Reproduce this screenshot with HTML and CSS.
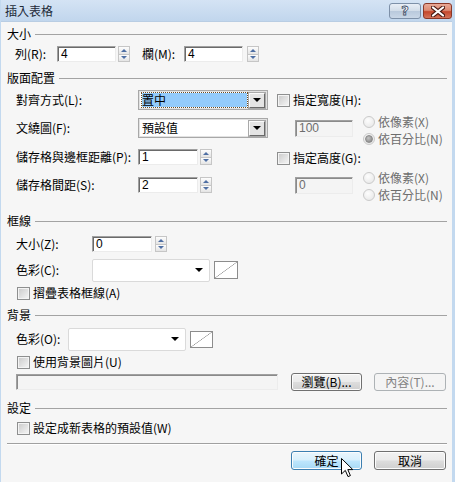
FILE: index.html
```html
<!DOCTYPE html>
<html lang="zh-Hant">
<head>
  <meta charset="UTF-8" />
  <title>插入表格</title>
  <link rel="stylesheet" href="styles.css">
</head>
<body>
<div class="window">
  <!-- Title bar -->
  <div class="titlebar">
    <span class="title">插入表格</span>
    <div class="caption-btns">
      <span class="cap-btn help">?</span>
      <span class="cap-btn close">
        <svg width="14" height="11" viewBox="0 0 14 11">
          <path d="M2 1.5 L12 9.5 M12 1.5 L2 9.5" stroke="#4a1a12" stroke-width="4.2" stroke-linecap="round"/>
          <path d="M2 1.5 L12 9.5 M12 1.5 L2 9.5" stroke="#fff" stroke-width="2.2" stroke-linecap="round"/>
        </svg>
      </span>
    </div>
  </div>

  <div class="client">
    <!-- 大小 -->
    <div class="group-head"><span>大小</span></div>
    <div class="row row-size">
      <span class="lbl w42">列(R):</span>
      <span class="field w59">4</span>
      <span class="spin"><i class="up"></i><i class="down"></i></span>
      <span class="lbl w42 gap12">欄(M):</span>
      <span class="field w59">4</span>
      <span class="spin gap4"><i class="up"></i><i class="down"></i></span>
    </div>

    <!-- 版面配置 -->
    <div class="group-head mt4"><span>版面配置</span></div>
    <div class="layout">
      <div class="layout-left">
        <div class="row h24">
          <span class="lbl w122">對齊方式(L):</span>
          <span class="select">
            <span class="select-text"><span class="selected">置中</span></span>
            <span class="drop-btn"><i></i></span>
          </span>
        </div>
        <div class="row h32">
          <span class="lbl w122">文繞圖(F):</span>
          <span class="select">
            <span class="select-text">預設值</span>
            <span class="drop-btn"><i></i></span>
          </span>
        </div>
        <div class="row h26">
          <span class="lbl w122">儲存格與邊框距離(P):</span>
          <span class="field w60">1</span>
          <span class="spin"><i class="up"></i><i class="down"></i></span>
        </div>
        <div class="row h30">
          <span class="lbl w122">儲存格間距(S):</span>
          <span class="field w60">2</span>
          <span class="spin"><i class="up"></i><i class="down"></i></span>
        </div>
      </div>

      <div class="layout-right">
        <div class="row h24"><span class="cb"></span>指定寬度(H):</div>
        <div class="sub">
          <span class="field disabled mt8">100</span>
          <div class="radios">
            <div class="radio-row first"><span class="radio"></span>依像素(X)</div>
            <div class="radio-row"><span class="radio on"></span>依百分比(N)</div>
          </div>
        </div>
        <div class="row h20"><span class="cb"></span>指定高度(G):</div>
        <div class="sub">
          <span class="field disabled mt9">0</span>
          <div class="radios">
            <div class="radio-row first"><span class="radio"></span>依像素(X)</div>
            <div class="radio-row"><span class="radio"></span>依百分比(N)</div>
          </div>
        </div>
      </div>
    </div>

    <!-- 框線 -->
    <div class="group-head mt7"><span>框線</span></div>
    <div class="row h26 indent">
      <span class="lbl w76">大小(Z):</span>
      <span class="field w60">0</span>
      <span class="spin gap3"><i class="up"></i><i class="down"></i></span>
    </div>
    <div class="row h26 indent">
      <span class="lbl w76">色彩(C):</span>
      <span class="color-drop"><i></i></span>
      <span class="swatch"></span>
    </div>
    <div class="row h20 indent-cb"><span class="cb"></span>摺疊表格框線(A)</div>

    <!-- 背景 -->
    <div class="group-head mt2"><span>背景</span></div>
    <div class="row h28 indent">
      <span class="lbl w52">色彩(O):</span>
      <span class="color-drop"><i></i></span>
      <span class="swatch small"></span>
    </div>
    <div class="row h18 indent-cb"><span class="cb"></span>使用背景圖片(U)</div>
    <div class="row h22 indent">
      <span class="field disabled file"></span>
      <span class="btn browse">瀏覽(B)...</span>
      <span class="btn off">內容(T)...</span>
    </div>

    <!-- 設定 -->
    <div class="group-head mt5"><span>設定</span></div>
    <div class="row h20 indent-cb"><span class="cb"></span>設定成新表格的預設值(W)</div>

    <div class="separator"></div>

    <div class="actions">
      <span class="btn ok">確定</span>
      <span class="btn">取消</span>
    </div>
  </div>

  <!-- mouse pointer over the OK button -->
  <svg class="pointer" width="13" height="20" viewBox="0 0 13 20">
    <path d="M0.5 0.5 L0.5 16 L4.3 12.4 L7 18.6 L9.4 17.6 L6.8 11.6 L11.8 11.6 Z" fill="#fff" stroke="#000" stroke-width="1" stroke-linejoin="miter"/>
  </svg>
</div>
</body>
</html>
```

FILE: styles.css
```css
* {
  box-sizing: border-box;
}

body {
  margin: 0;
  font-family: "Noto Sans CJK TC", "Noto Sans", sans-serif;
  font-size: 12px;
  color: #000;
  background: #f6f6f6;
}

.window {
  position: relative;
  width: 455px;
  height: 482px;
  overflow: hidden;
  background: #f6f6f6;
  border-left: 1px solid #c3d9ef;
  border-right: 3px solid #c3d9ef;
}

/* title bar */
.titlebar {
  height: 22px;
  display: flex;
  align-items: center;
  justify-content: space-between;
  padding-left: 4px;
  background: linear-gradient(#d4e3f4, #c1d6ed);
  border-bottom: 1px solid #b9cde3;
}

.title {
  font-size: 12px;
  line-height: 14px;
  color: #1e2a38;
}

.caption-btns {
  display: flex;
  align-self: flex-start;
  margin-top: 3px;
  gap: 2px;
}

.cap-btn {
  height: 16px;
  border-radius: 3px;
  display: flex;
  align-items: center;
  justify-content: center;
}

.help {
  width: 32px;
  border: 1px solid #7d90a8;
  background: linear-gradient(#e8eef6 0%, #d2dde9 48%, #b9c9dc 52%, #c9d7e7 100%);
  color: #fff;
  font-family: "DejaVu Sans", sans-serif;
  font-weight: bold;
  font-size: 13px;
  -webkit-text-stroke: 0.8px #3c4d66;
  line-height: 14px;
}

.close {
  width: 29px;
  border: 1px solid #8a3828;
  background: linear-gradient(#e9a996 0%, #dc8a73 45%, #c5472c 55%, #d3735a 100%);
}

/* client area */
.client {
  padding: 2px 5px 0 6px;
}

.group-head {
  display: flex;
  align-items: center;
  height: 20px;
  line-height: 14px;
}

.group-head::after {
  content: "";
  flex: 1;
  height: 1px;
  margin-left: 4px;
  background: #a3a3a3;
}

.mt2 { margin-top: 2px; }
.mt4 { margin-top: 4px; }
.mt5 { margin-top: 5px; }
.mt7 { margin-top: 7px; }
.mt8 { margin-top: 8px; }
.mt9 { margin-top: 9px; }

.row {
  display: flex;
  align-items: center;
  line-height: 14px;
  white-space: nowrap;
}

.row-size {
  height: 20px;
  padding-left: 8px;
}

.h18 { height: 18px; }
.h20 { height: 20px; }
.h22 { height: 22px; }
.h24 { height: 24px; }
.h26 { height: 26px; }
.h28 { height: 28px; }
.h30 { height: 30px; }
.h32 { height: 32px; }

.indent { padding-left: 9px; }
.indent-cb { padding-left: 10px; }

.lbl { flex: none; }
.w42 { width: 42px; }
.w52 { width: 52px; }
.w76 { width: 76px; }
.w122 { width: 122px; }
.gap12 { margin-left: 12px; }
.gap4 { margin-left: 4px !important; }
.gap3 { margin-left: 3px !important; }

/* sunken text field */
.field {
  height: 16px;
  background: #fff;
  border: 1px solid;
  border-color: #a0a0a0 #ececec #ececec #a0a0a0;
  box-shadow: inset 1px 1px 0 #6a6a6a;
  padding-left: 3px;
  line-height: 14px;
  font-family: "Liberation Sans", "Noto Sans CJK TC", sans-serif;
  font-size: 12px;
  flex: none;
}

.w59 { width: 59px; }
.w60 { width: 60px; }

.field.disabled {
  width: 58px;
  height: 17px;
  background: #f4f4f4;
  color: #6d6d6d;
  box-shadow: inset 1px 1px 0 #8a8a8a;
}

.field.file {
  width: 262px;
  height: 16px;
}

/* spin buttons */
.spin {
  display: flex;
  flex-direction: column;
  width: 12px;
  height: 16px;
  margin-left: 2px;
  flex: none;
}

.spin i {
  flex: 1;
  display: flex;
  align-items: center;
  justify-content: center;
  border: 1px solid #c6c6c6;
  background: linear-gradient(#fdfdfd, #e4e4e4);
}

.spin i + i {
  border-top: none;
}

.spin .up::after {
  content: "";
  border-left: 3px solid transparent;
  border-right: 3px solid transparent;
  border-bottom: 3px solid #4f6fa3;
}

.spin .down::after {
  content: "";
  border-left: 3px solid transparent;
  border-right: 3px solid transparent;
  border-top: 3px solid #4f6fa3;
}

/* layout section */
.layout {
  display: flex;
}

.layout-left {
  width: 270px;
  padding-left: 9px;
}

.layout-right {
  flex: 1;
}

.sub {
  display: flex;
  height: 36px;
  padding-left: 18px;
  align-items: flex-start;
}

.radios {
  margin-left: 10px;
  color: #6d6d6d;
}

.radio-row {
  display: flex;
  align-items: center;
  height: 18px;
  line-height: 14px;
  white-space: nowrap;
}

.radio-row.first {
  height: 16px;
  margin-top: 2px;
}

.radio {
  width: 12px;
  height: 12px;
  margin-right: 3px;
  border-radius: 50%;
  border: 1px solid #cacaca;
  background: radial-gradient(circle at 40% 35%, #fdfdfd, #e4e4e4);
  display: flex;
  align-items: center;
  justify-content: center;
}

.radio.on::after {
  content: "";
  width: 6px;
  height: 6px;
  border-radius: 50%;
  background: radial-gradient(circle at 40% 35%, #c4c4c4, #7d7d7d);
  border: 1px solid #8a8a8a;
}

/* checkbox */
.cb {
  width: 13px;
  height: 13px;
  margin-right: 3px;
  flex: none;
  border: 1px solid #8e8f8f;
  background: linear-gradient(135deg, #c9c9c9, #f7f7f7);
  box-shadow: inset 0 0 0 1px #f4f4f4;
}

/* dropdowns */
.select {
  width: 130px;
  height: 20px;
  display: flex;
  align-items: center;
  border: 1px solid #a8a8a8;
  box-shadow: inset 0 0 0 1px #e2e2e2;
  background: #fff;
  padding: 2px;
}

.select-text {
  flex: 1;
  height: 14px;
  line-height: 14px;
  padding-left: 1px;
}

.selected {
  display: block;
  height: 14px;
  margin-right: 2px;
  background: #93cbfb;
  outline: 1px dotted #6b4a20;
}

.drop-btn {
  width: 16px;
  height: 15px;
  display: flex;
  align-items: center;
  justify-content: center;
  background: #e4e4e4;
  border: 1px solid;
  border-color: #fbfbfb #696969 #696969 #fbfbfb;
  outline: 1px solid #a9a9a9;
}

.drop-btn i,
.color-drop i {
  border-left: 4px solid transparent;
  border-right: 4px solid transparent;
  border-top: 4px solid #000;
}

.color-drop {
  width: 118px;
  height: 23px;
  display: flex;
  align-items: center;
  justify-content: flex-end;
  padding-right: 6px;
  background: #fff;
  border: 1px solid #dadada;
  border-radius: 2px;
}

.swatch {
  width: 24px;
  height: 18px;
  margin-left: 4px;
  border: 1px solid #8c8c8c;
  background: linear-gradient(to bottom right, #fff calc(50% - 0.6px), #9a9a9a 50%, #fff calc(50% + 0.6px));
}

.swatch.small {
  width: 23px;
  height: 17px;
}

/* push buttons */
.btn {
  display: flex;
  align-items: center;
  justify-content: center;
  width: 72px;
  height: 19px;
  border: 1px solid #707070;
  border-radius: 3px;
  background: linear-gradient(#f2f2f2 0%, #ebebeb 48%, #dddddd 52%, #cfcfcf 100%);
  box-shadow: inset 0 0 0 1px #fcfcfc;
  line-height: 14px;
}

.browse {
  width: 71px;
  height: 18px;
  margin-left: 13px;
}

.btn.off {
  margin-left: 12px;
  height: 18px;
  border-color: #adb2b5;
  background: #f4f4f4;
  box-shadow: none;
  color: #838383;
}

.btn.ok {
  width: 71px;
  border-color: #3c7fb1;
  background: linear-gradient(#eaf6fd 0%, #d9f0fc 48%, #bee6fd 52%, #a7d9f5 100%);
}

.separator {
  margin-top: 5px;
  height: 2px;
  border-top: 1px solid #a0a0a0;
  border-bottom: 1px solid #fff;
}

.actions {
  display: flex;
  justify-content: flex-end;
  gap: 12px;
  margin-top: 6px;
  padding-right: 1px;
}

.pointer {
  position: absolute;
  left: 340px;
  top: 458px;
}
```
